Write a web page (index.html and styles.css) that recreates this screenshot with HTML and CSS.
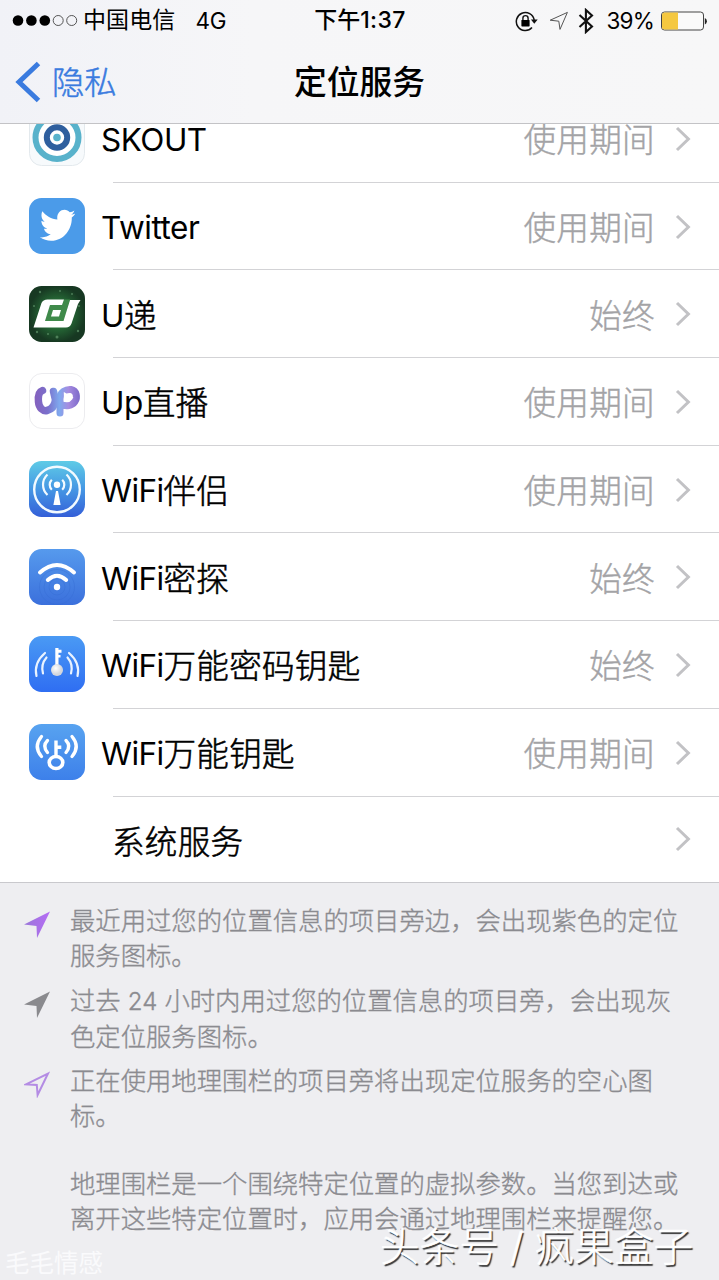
FILE: index.html
```html
<!DOCTYPE html>
<html lang="zh-CN">
<head>
<meta charset="utf-8">
<title>定位服务</title>
<link rel="stylesheet" href="styles.css">
</head>
<body>
<svg class="defs" width="0" height="0" aria-hidden="true">
  <defs>
    <linearGradient id="g-cyan" x1="0" y1="0" x2="0" y2="1"><stop offset="0" stop-color="#5fcbe6"/><stop offset=".5" stop-color="#4597e4"/><stop offset="1" stop-color="#345fd8"/></linearGradient>
    <linearGradient id="g-blue" x1="0" y1="0" x2="0" y2="1"><stop offset="0" stop-color="#569aed"/><stop offset="1" stop-color="#3b70dc"/></linearGradient>
    <linearGradient id="g-deep" x1="0" y1="0" x2="0" y2="1"><stop offset="0" stop-color="#4a9af4"/><stop offset="1" stop-color="#2f6ef2"/></linearGradient>
    <linearGradient id="g-sky" x1="0" y1="0" x2="0" y2="1"><stop offset="0" stop-color="#58a3f0"/><stop offset="1" stop-color="#3d80ea"/></linearGradient>
    <linearGradient id="g-up" gradientUnits="userSpaceOnUse" x1="5" y1="0" x2="51" y2="0"><stop offset="0" stop-color="#8560bd"/><stop offset=".3" stop-color="#7a70cc"/><stop offset=".55" stop-color="#7fa9ee"/><stop offset=".75" stop-color="#a68be0"/><stop offset="1" stop-color="#7c69c9"/></linearGradient>
    <radialGradient id="g-green"><stop offset="0" stop-color="#3c9a4a"/><stop offset=".55" stop-color="#246434"/><stop offset="1" stop-color="#173822"/></radialGradient>
    <radialGradient id="g-ball" cx=".4" cy=".35"><stop offset="0" stop-color="#fff"/><stop offset="1" stop-color="#d3d6dc"/></radialGradient>
    <linearGradient id="g-purple" x1="0" y1="0" x2="1" y2="0"><stop offset="0" stop-color="#9a78d8"/><stop offset="1" stop-color="#b56bf5"/></linearGradient>
    <symbol id="chev" viewBox="0 0 16 26"><path d="M2 2 L13.400 13 L2 24" fill="none" stroke="#c2c2c5" stroke-width="3"/></symbol>
  </defs>
</svg>

<header class="top">
  <div class="status">
    <div class="status-left">
      <svg width="66" height="14" viewBox="0 0 66 14"><g fill="#000"><circle cx="6" cy="6.500" r="5.300"/><circle cx="19.400" cy="6.500" r="5.300"/><circle cx="32.800" cy="6.500" r="5.300"/></g><g fill="none" stroke="#444" stroke-width=".9"><circle cx="46.200" cy="6.500" r="5"/><circle cx="59.700" cy="6.500" r="5"/></g></svg>
      <span class="carrier">中国电信</span>
      <span class="net">4G</span>
    </div>
    <div class="clock">下午<span class="num">1:37</span></div>
    <div class="status-right">
      <svg width="24" height="24" viewBox="0 0 24 24"><path d="M17 18.600 A9 9 0 1 1 19.200 11" fill="none" stroke="#111" stroke-width="1.500"/><path d="M15.900 10.500h6.800l-3.400 4.200z" fill="#111"/><rect x="6.400" y="11" width="8.200" height="6.400" rx=".6"/><path d="M7.900 11V9.200a2.600 2.600 0 0 1 5.200 0V11" fill="none" stroke="#111" stroke-width="1.400"/></svg>
      <svg class="s-loc" width="20" height="20" viewBox="0 0 20 20"><path d="M1.200 9.200 L18.400 1.400 L11 18.400 L9.800 10.200 Z" fill="none" stroke="#555" stroke-width="1"/></svg>
      <svg class="s-bt" width="16" height="26" viewBox="0 0 16 26"><path d="M1.500 7 L14 18.400 L7.900 24 V2 L14 7.600 L1.500 19" fill="none" stroke="#111" stroke-width="2.100"/></svg>
      <span class="pct">39%</span>
      <svg class="s-bat" width="48" height="20" viewBox="0 0 48 20"><rect x="1.500" y="1" width="42" height="18" rx="3" fill="#fafafa" stroke="#444" stroke-width="1"/><path d="M4.500 1.500H18v17H4.500a2.500 2.500 0 0 1-2.500-2.500v-12a2.500 2.500 0 0 1 2.500-2.500z" fill="#f5c840"/><path d="M44.800 7a3.500 3.500 0 0 1 0 6.400z" fill="#222"/></svg>
    </div>
  </div>
  <div class="nav">
    <a class="back"><svg width="26" height="42" viewBox="0 0 26 42"><path d="M23.500 2.500 L4 21 L23.500 39.500" fill="none" stroke="#3a7bdf" stroke-width="5"/></svg><span>隐私</span></a>
    <h1 class="title">定位服务</h1>
  </div>
</header>

<main>
  <ul class="list">
    <li class="row">
      <svg class="app" viewBox="0 0 56 56"><rect x=".5" y=".5" width="55" height="55" rx="12" fill="#f7fafc" stroke="#e3e9ed"/><circle cx="28" cy="27.500" r="21.500" fill="#fff" stroke="#58b2cb" stroke-width="6"/><circle cx="28" cy="27.500" r="10.200" fill="#fff" stroke="#2f5f9e" stroke-width="6"/><circle cx="28" cy="27.500" r="3.800" fill="#58b2cb"/></svg>
      <div class="cell"><span class="name"><span class="lat">SKOUT</span></span><span class="val">使用期间</span><svg class="chev"><use href="#chev"/></svg></div>
    </li>
    <li class="row">
      <svg class="app" viewBox="0 0 56 56"><rect width="56" height="56" rx="12.500" fill="#4b9be9"/><path transform="translate(9.500 7.200) scale(1.560 1.680)" fill="#fff" d="M23.643 4.937c-.835.37-1.732.62-2.675.733.962-.576 1.700-1.490 2.048-2.578-.900.534-1.897.922-2.958 1.130-.850-.904-2.060-1.470-3.400-1.470-2.572 0-4.658 2.086-4.658 4.660 0 .364.042.718.120 1.060-3.873-.195-7.304-2.050-9.602-4.868-.400.690-.630 1.490-.630 2.342 0 1.616.823 3.043 2.072 3.878-.764-.025-1.482-.234-2.110-.583v.060c0 2.257 1.605 4.140 3.737 4.568-.392.106-.803.162-1.227.162-.300 0-.593-.028-.877-.082.593 1.850 2.313 3.198 4.352 3.234-1.595 1.250-3.604 1.995-5.786 1.995-.376 0-.747-.022-1.112-.065 2.062 1.323 4.510 2.093 7.140 2.093 8.570 0 13.255-7.098 13.255-13.254 0-.200-.005-.402-.014-.602.910-.658 1.700-1.477 2.323-2.410z"/></svg>
      <div class="cell"><span class="name"><span class="lat twitter">Twitter</span></span><span class="val">使用期间</span><svg class="chev"><use href="#chev"/></svg></div>
    </li>
    <li class="row">
      <svg class="app" viewBox="0 0 56 56"><rect width="56" height="56" rx="12.500" fill="url(#g-green)"/><g fill="#6ea578" opacity=".6"><circle cx="11" cy="6" r="1.200"/><circle cx="31" cy="5" r="1"/><circle cx="43" cy="8" r="1"/><circle cx="8" cy="46" r="1.200"/><circle cx="28" cy="51" r="1.500"/><circle cx="49" cy="45" r="1.200"/><circle cx="19" cy="48" r="1"/><circle cx="50" cy="20" r="1"/><circle cx="5" cy="20" r="1"/></g><path d="M35 13.500H41L34.500 35H16L21 19H33z" fill="#3f8a4a"/><path d="M35 13.500H18.500Q14 13.500 12.500 17L4.500 41.500H37Q41 41.500 42.500 37.500L49 18L51.500 14H41L34.500 35H16L21 19H33z" fill="#fff"/><path d="M24 24h8l-2 6.500h-8z" fill="#fff"/></svg>
      <div class="cell"><span class="name"><span class="lat">U</span>递</span><span class="val">始终</span><svg class="chev"><use href="#chev"/></svg></div>
    </li>
    <li class="row">
      <svg class="app" viewBox="0 0 56 56"><rect x=".5" y=".5" width="55" height="55" rx="12.500" fill="#fff" stroke="#ececef"/><g fill="none" stroke="url(#g-up)" stroke-linecap="round" stroke-linejoin="round"><path d="M13.500 17.500C9 19 9 24 9.500 29C10 35 14 38.500 18 37.500C24 36 26 31 26.500 27L24.500 18.500" stroke-width="7.500"/><path d="M31 40V26C31 19 37 16 42 16.500C48 17.500 48.500 25 46 28.500C43 33 37 33.500 32 31.500" stroke-width="7"/></g><path d="M34.800 19L44.500 24.500L35 29z" fill="#fff"/></svg>
      <div class="cell"><span class="name"><span class="lat">Up</span>直播</span><span class="val">使用期间</span><svg class="chev"><use href="#chev"/></svg></div>
    </li>
    <li class="row">
      <svg class="app" viewBox="0 0 56 56"><rect width="56" height="56" rx="12.500" fill="url(#g-cyan)"/><g fill="none" stroke="#f2faff" stroke-width="2.200"><circle cx="28" cy="28.500" r="22.800" stroke-width="2.400"/><path d="M22.800 18.700a7 7 0 0 0 0 10M33.200 18.700a7 7 0 0 1 0 10M18.500 13.500a14 14 0 0 0 0 20.500M37.500 13.500a14 14 0 0 1 0 20.500"/></g><circle cx="28" cy="23.700" r="3.200" fill="#fff"/><path d="M27 30h2l2.600 14h-7.200z" fill="#fff"/></svg>
      <div class="cell"><span class="name"><span class="lat wifi">WiFi</span>伴侣</span><span class="val">使用期间</span><svg class="chev"><use href="#chev"/></svg></div>
    </li>
    <li class="row">
      <svg class="app" viewBox="0 0 56 56"><rect width="56" height="56" rx="12.500" fill="url(#g-blue)"/><g fill="none" stroke="#346bd2" stroke-opacity=".35"><circle cx="28" cy="38" r="8"/><circle cx="28" cy="38" r="13"/><circle cx="28" cy="38" r="17.500"/></g><g fill="none" stroke="#fff" stroke-width="4" stroke-linecap="round"><path d="M11 23.500Q28 8.500 45 23.500M18.800 31Q28 22.500 37.200 31"/></g><circle cx="28" cy="38" r="3.200" fill="#fff"/></svg>
      <div class="cell"><span class="name"><span class="lat wifi">WiFi</span>密探</span><span class="val">始终</span><svg class="chev"><use href="#chev"/></svg></div>
    </li>
    <li class="row">
      <svg class="app" viewBox="0 0 56 56"><rect width="56" height="56" rx="12.500" fill="url(#g-deep)"/><g fill="none" stroke="#e9f3ff" stroke-width="2.200" stroke-linecap="round"><path d="M17.500 21.500Q11.500 28.500 14 37.500M38.500 21.500Q44.500 28.500 42 37.500"/><path d="M16 17Q4.500 27 7.500 40M40 17Q51.500 27 48.500 40"/></g><path d="M26.300 12h3.200v1.800h3v3h-3v2.200h2v2.600h-2V30h-3.200z" fill="#fff"/><circle cx="28" cy="34" r="6" fill="url(#g-ball)"/></svg>
      <div class="cell"><span class="name"><span class="lat wifi">WiFi</span>万能密码钥匙</span><span class="val">始终</span><svg class="chev"><use href="#chev"/></svg></div>
    </li>
    <li class="row">
      <svg class="app" viewBox="0 0 56 56"><rect width="56" height="56" rx="12.500" fill="url(#g-sky)"/><g fill="none" stroke="#fff" stroke-width="3.300" stroke-linecap="round"><path d="M18.500 16.500Q13 22 18.500 28.500M37 16.500Q42.500 22 37 28.500"/><path d="M12.500 12.500Q4 22.500 12.500 32.500M43 12.500Q51.500 22.500 43 32.500"/></g><ellipse cx="27" cy="38.500" rx="6.800" ry="6" fill="none" stroke="#fff" stroke-width="3.600"/><path d="M25.300 16.500h3.400v5h3.600v3.600h-3.600V32h-3.400z" fill="#fff"/></svg>
      <div class="cell"><span class="name"><span class="lat wifi">WiFi</span>万能钥匙</span><span class="val">使用期间</span><svg class="chev"><use href="#chev"/></svg></div>
    </li>
    <li class="row system">
      <div class="cell"><span class="name">系统服务</span><svg class="chev"><use href="#chev"/></svg></div>
    </li>
  </ul>

  <section class="legend">
    <div class="item"><svg class="arrow" viewBox="0 0 26 26"><path d="M0 13L26 0L13 26.500L12.500 14.500z" fill="url(#g-purple)"/></svg><p>最近用过您的位置信息的项目旁边，会出现紫色的定位<br>服务图标。</p></div>
    <div class="item"><svg class="arrow" viewBox="0 0 26 26"><path d="M0 13L26 0L13 26.500L12.500 14.500z" fill="#8a8a8e"/></svg><p>过去 <span class="hours">24</span> 小时内用过您的位置信息的项目旁，会出现灰<br>色定位服务图标。</p></div>
    <div class="item"><svg class="arrow" viewBox="0 0 26 26"><path d="M2 12.800L24 2L13.600 23.500L12.800 13.500z" fill="none" stroke="#b48ce4" stroke-width="2"/></svg><p>正在使用地理围栏的项目旁将出现定位服务的空心图<br>标。</p></div>
    <p class="note">地理围栏是一个围绕特定位置的虚拟参数。当您到达或<br>离开这些特定位置时，应用会通过地理围栏来提醒您。</p>
  </section>
</main>
<div class="mark mark-left">毛毛情感</div>
<div class="mark mark-right">头条号 / 疯果盒子</div>
</body>
</html>
```
FILE: styles.css
```css
* { box-sizing: border-box; }
body {
  margin: 0;
  width: 719px;
  height: 1280px;
  display: flex;
  flex-direction: column;
  overflow: hidden;
  position: relative;
  background: #eeeef1;
  color: #000;
  font-family: Inter, "Noto Sans CJK SC", sans-serif;
}
.defs { position: absolute; }
svg { display: block; flex: none; }
h1, p, ul { margin: 0; padding: 0; }

.top {
  flex: none;
  height: 124px;
  background: linear-gradient(90deg, #f1f2f7, #f6f6f8 35%, #f7f7f8);
  border-bottom: 1px solid #c3c3c6;
}
.status {
  display: grid;
  grid-template-columns: 1fr auto 1fr;
  align-items: center;
  height: 41px;
  padding: 0 11px 0 12px;
  font-size: 22.500px;
  line-height: 41px;
  white-space: nowrap;
}
.status-left, .status-right { display: flex; align-items: center; }
.status-right { justify-content: flex-end; }
.carrier { margin-left: 5px; font-size: 23px; letter-spacing: .1px; }
.net { margin-left: 20px; letter-spacing: -.2px; }
.clock { font-weight: 500; font-size: 23px; }
.clock .num { font-weight: 500; font-size: 23px; letter-spacing: .4px; }
.s-loc { margin-left: 10px; }
.s-bt { margin-left: 9px; }
.pct { margin-left: 12px; letter-spacing: -.800px; }
.s-bat { margin-left: 6px; }

.nav {
  display: grid;
  grid-template-columns: 1fr auto 1fr;
  align-items: center;
  height: 82px;
}
.back { display: flex; align-items: center; gap: 11px; padding-left: 15px; color: #3a7bdf; font-size: 32.300px; font-weight: 300; line-height: 81px; -webkit-text-stroke: .5px currentColor; }
.title { font-size: 32.800px; font-weight: 500; line-height: 81px; }

main { flex: 1; min-height: 0; overflow: hidden; }
.list { list-style: none; margin-top: -29px; background: #fff; border-bottom: 1px solid #c9c9cd; }
.row { display: flex; align-items: center; height: 87.700px; padding-left: 29px; position: relative; }
.row::after { content: ""; position: absolute; left: 113px; right: 0; bottom: 0; height: 1px; background: #d3d3d6; }
.row:last-child { height: 85.500px; }
.row:last-child::after { display: none; }
.app { width: 56px; height: 56px; margin-top: -1px; }
.cell { flex: 1; display: flex; align-items: center; padding: 0 28px 0 16px; }
.system .cell { padding-left: 83px; }
.name, .val { padding-top: 3px; font-size: 32.600px; font-weight: 300; line-height: 48px; white-space: nowrap; }
.name { flex: 1; letter-spacing: .250px; -webkit-text-stroke: .550px currentColor; }
.system .name { padding-top: 5px; }
.lat { font-size: 31.500px; font-weight: 400; letter-spacing: -.5px; vertical-align: 1px; -webkit-text-stroke: 0; }
.lat.twitter { letter-spacing: -.450px; }
.lat.wifi { letter-spacing: -.6px; }
.val { letter-spacing: .3px; color: #a3a3a6; -webkit-text-stroke: .4px currentColor; }
.chev { width: 16px; height: 26px; margin-left: 20px; }

.legend { padding: 20px 0 0 24px; color: #8b8b90; font-size: 25.350px; font-weight: 300; line-height: 35px; white-space: nowrap; -webkit-text-stroke: .350px currentColor; }
.item { display: flex; gap: 20px; height: 70px; margin-bottom: 10px; }
.arrow { width: 26px; height: 27px; margin-top: 8px; }
.hours { font-size: 24px; }
.note { padding: 23px 0 0 46px; }

.mark { position: absolute; white-space: nowrap; color: #fff; }
.mark-left { left: 5px; top: 1245px; font-size: 24.500px; line-height: 36px; color: #fafafc; }
.mark-right { left: 380px; top: 1221px; font-size: 39.600px; font-weight: 300; line-height: 52px; -webkit-text-stroke: .5px #fff; text-shadow: 1.500px 1.500px 1px #333; }
```
